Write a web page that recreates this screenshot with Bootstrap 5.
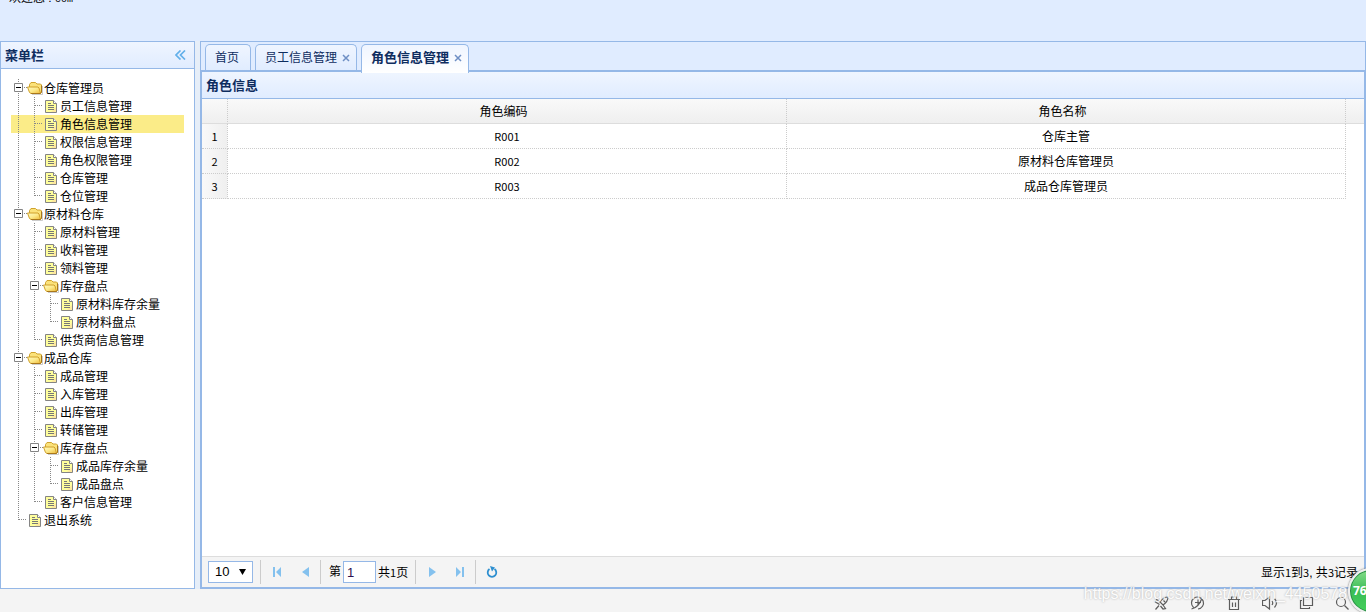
<!DOCTYPE html>
<html lang="zh-CN">
<head>
<meta charset="utf-8">
<meta name="viewport" content="width=device-width, initial-scale=1">
<title>仓库管理系统</title>
<link rel="stylesheet" href="https://cdn.jsdelivr.net/npm/bootstrap@5.3.0/dist/css/bootstrap.min.css">
<style>
:root{--edge:#95b8e7;--ink:#0e2d5f}
body{height:100vh;font:12px/18px "Liberation Sans","Noto Sans CJK SC",sans-serif;color:#000;background:#f4f4f4;overflow:hidden}
.digits{font-family:"Noto Sans CJK SC",sans-serif;font-size:11px}
.mono{font-family:"Liberation Mono",monospace;font-size:10px}
.top-area{height:41px;background:#e0ecff;overflow:hidden;padding-left:9px}
.welcome{margin-top:-11px;line-height:18px}
.work-area{background:#e6eef8;min-height:0;gap:5px}
.side{width:195px;border:1px solid var(--edge);background:#fff}
.bar-title{height:27px;padding:0 4px;background:linear-gradient(#eff5ff,#e0ecff);border-bottom:1px solid var(--edge);color:var(--ink);font-size:13px;font-weight:700;line-height:27px;margin:0}
.bare{border:0;background:none;padding:0;display:flex;align-items:center;justify-content:center}
.tree{padding:10px;margin:0;list-style:none}
.tree li{display:flex;height:18px}
.tree li.picked{background:#fbec88}
.tree a{color:#000;text-decoration:none;line-height:20px;padding-left:1px;white-space:nowrap}
.tree svg{width:16px;height:18px;flex:none}
.tabs-head{background:#e0ecff;border:1px solid var(--edge);border-bottom:0;height:29px;padding:2px 4px 0;gap:4px}
.tab{height:27px;border:1px solid var(--edge);border-bottom:0;border-radius:5px 5px 0 0;background:linear-gradient(#eff5ff,#e0ecff);padding:0 11px 0 9px;color:var(--ink);line-height:26px;display:flex;align-items:center}
.tab a{color:inherit;text-decoration:none}
.tab.on{height:29px;position:relative;background:linear-gradient(#eff5ff,#fff);font-weight:700;font-size:13px;padding-bottom:2px}
.tab.closable{padding-right:6px}
.tab .bare{margin-left:5px}
.tab-body{border:2px solid var(--edge);background:#fff;min-height:0}
.grid-wrap{position:relative;overflow:hidden;background:linear-gradient(#f9f9f9,#efefef) 0 0/100% 24px no-repeat}
.grid-wrap::after{content:"";position:absolute;right:0;top:24px;width:18px;height:1px;background:#ddd}
.roles{width:calc(100% - 18px);table-layout:fixed;border-collapse:separate;border-spacing:0;text-align:center}
.roles th,.roles td{height:25px;padding:2px 0 0;font-weight:400;border-right:1px dotted #ccc;border-bottom:1px dotted #ccc;line-height:22px}
.roles .digits{padding:0}
.roles thead th{border-bottom:1px solid #ddd;padding-right:7px}
.roles tbody th{background:linear-gradient(90deg,#f9f9f9,#efefef)}
.roles .num{width:26px}
.pager{height:31px;border-top:1px solid #ddd;background:#f4f4f4;padding:0 6px;line-height:20px}
.pager select{width:45px;height:22px;border:1px solid var(--edge);background:#fff;padding:0 0 0 6px;font-size:13px;appearance:none;color:#000;border-radius:0;display:block}
.picker{position:relative;margin-right:6px}
.picker svg{position:absolute;right:7px;top:8px;pointer-events:none}
.pager input{width:33px;height:22px;border:1px solid var(--edge);padding:0 3px;font-size:13px;color:#2c1050;margin:0 2px}
.pager .bare{width:28px;height:24px}
.rule{width:1px;height:24px;background:#ccc;margin:0 2px 0 1px}
.page-no{margin-left:6px}
.total{margin-right:6px}
.foot{height:23px;gap:20px;padding:6px 16px 0 0}
.foot .bare{width:16px;height:16px}
.foot svg{width:16px;height:16px;fill:none;stroke:#5c5c5c;stroke-width:1.2}
.water{position:absolute;right:10px;bottom:7px;font-size:16px;line-height:22px;color:#fff;opacity:.8;text-shadow:0 0 2px #999;pointer-events:none}
.ball{position:absolute;right:-28px;bottom:-2px;width:46px;height:46px;border-radius:50%;border:2px solid #eee;box-shadow:0 0 2px #555,inset 0 0 0 1px #2a8c46;background:linear-gradient(#86dd8a,#3bbd56 50%,#43d05a);color:#fff;font:700 12px/42px "Open Sans",sans-serif;padding-left:3px}
</style>
</head>
<body class="d-flex flex-column position-relative">
<svg class="position-absolute" width="0" height="0">
  <defs>
    <linearGradient id="fg" x1="0" y1="0" x2="1" y2="1"><stop offset="0" stop-color="#fffcc4"/><stop offset=".5" stop-color="#fce98a"/><stop offset="1" stop-color="#eebb3a"/></linearGradient>
    <symbol id="v" viewBox="0 0 16 18"><path d="M7.500 0V18" stroke="#888" stroke-dasharray="1 1"/></symbol>
    <symbol id="t" viewBox="0 0 16 18"><path d="M7.500 0V18M8 8.500H16" stroke="#888" stroke-dasharray="1 1"/></symbol>
    <symbol id="l" viewBox="0 0 16 18"><path d="M7.500 0V9M8 8.500H16" stroke="#888" stroke-dasharray="1 1"/></symbol>
    <symbol id="m" viewBox="0 0 16 18"><path d="M7.500 0V18M13 8.500H16" stroke="#888" stroke-dasharray="1 1"/><path d="M3.500 4.500h8v8h-8z" fill="#fff" stroke="#848484"/><path d="M5 8.500h5" stroke="#000"/></symbol>
    <symbol id="f" viewBox="0 0 16 18"><path d="M5 15.500h10.500V7" fill="none" stroke="#aaa" stroke-opacity=".6"/><path d="M2.500 8V5.500l1.500-2h4.500l1.500 1.500h3.500l1 1v7l-1 1.500" fill="#fbe27a" stroke="#cfa22c"/><path d="M.500 8h10.500l1 1 1.500 5.500H4L2.500 13.500z" fill="url(#fg)" stroke="#d0a02a"/><path d="M4 14.500h9.500l1-1.500V6.500" fill="none" stroke="#a9771a"/></symbol>
    <symbol id="d" viewBox="0 0 16 18"><path d="M2.500 3.500h8l3 3v9h-11z" fill="#ffff9c" stroke="#848484"/><path d="M10.500 3.500v3h3" fill="#fff" stroke="#848484"/><path d="M13 10v5H8z" fill="#fbd9a0" opacity=".6"/><path d="M5 6.500h3M5 8.500h6M5 10.500h6M5 12.500h6" stroke="#777"/></symbol>
    <symbol id="x" viewBox="0 0 8 8"><path d="M1 1l6 6M7 1l-6 6" stroke="#6e8fc4" stroke-width="1.500"/></symbol>
  </defs>
</svg>

<header class="top-area"><div class="welcome">欢迎您 : <span class="mono">com</span></div></header>

<main class="work-area d-flex flex-fill">
  <aside class="side flex-shrink-0">
    <div class="bar-title d-flex align-items-center justify-content-between">菜单栏
      <button class="bare me-1" aria-label="收起"><svg width="11" height="10" fill="none" stroke="#62b0ea" stroke-width="1.700"><path d="M5.500 .500L1 5l4.500 4.500M10 .500L5.500 5 10 9.500"/></svg></button>
    </div>
    <ul class="tree">
      <li><svg><use href="#m"/></svg><svg><use href="#f"/></svg><a href="#">仓库管理员</a></li>
      <li><svg><use href="#v"/></svg><svg><use href="#t"/></svg><svg><use href="#d"/></svg><a href="#">员工信息管理</a></li>
      <li class="picked"><svg><use href="#v"/></svg><svg><use href="#t"/></svg><svg><use href="#d"/></svg><a href="#">角色信息管理</a></li>
      <li><svg><use href="#v"/></svg><svg><use href="#t"/></svg><svg><use href="#d"/></svg><a href="#">权限信息管理</a></li>
      <li><svg><use href="#v"/></svg><svg><use href="#t"/></svg><svg><use href="#d"/></svg><a href="#">角色权限管理</a></li>
      <li><svg><use href="#v"/></svg><svg><use href="#t"/></svg><svg><use href="#d"/></svg><a href="#">仓库管理</a></li>
      <li><svg><use href="#v"/></svg><svg><use href="#l"/></svg><svg><use href="#d"/></svg><a href="#">仓位管理</a></li>
      <li><svg><use href="#m"/></svg><svg><use href="#f"/></svg><a href="#">原材料仓库</a></li>
      <li><svg><use href="#v"/></svg><svg><use href="#t"/></svg><svg><use href="#d"/></svg><a href="#">原材料管理</a></li>
      <li><svg><use href="#v"/></svg><svg><use href="#t"/></svg><svg><use href="#d"/></svg><a href="#">收料管理</a></li>
      <li><svg><use href="#v"/></svg><svg><use href="#t"/></svg><svg><use href="#d"/></svg><a href="#">领料管理</a></li>
      <li><svg><use href="#v"/></svg><svg><use href="#m"/></svg><svg><use href="#f"/></svg><a href="#">库存盘点</a></li>
      <li><svg><use href="#v"/></svg><svg><use href="#v"/></svg><svg><use href="#t"/></svg><svg><use href="#d"/></svg><a href="#">原材料库存余量</a></li>
      <li><svg><use href="#v"/></svg><svg><use href="#v"/></svg><svg><use href="#l"/></svg><svg><use href="#d"/></svg><a href="#">原材料盘点</a></li>
      <li><svg><use href="#v"/></svg><svg><use href="#l"/></svg><svg><use href="#d"/></svg><a href="#">供货商信息管理</a></li>
      <li><svg><use href="#m"/></svg><svg><use href="#f"/></svg><a href="#">成品仓库</a></li>
      <li><svg><use href="#v"/></svg><svg><use href="#t"/></svg><svg><use href="#d"/></svg><a href="#">成品管理</a></li>
      <li><svg><use href="#v"/></svg><svg><use href="#t"/></svg><svg><use href="#d"/></svg><a href="#">入库管理</a></li>
      <li><svg><use href="#v"/></svg><svg><use href="#t"/></svg><svg><use href="#d"/></svg><a href="#">出库管理</a></li>
      <li><svg><use href="#v"/></svg><svg><use href="#t"/></svg><svg><use href="#d"/></svg><a href="#">转储管理</a></li>
      <li><svg><use href="#v"/></svg><svg><use href="#m"/></svg><svg><use href="#f"/></svg><a href="#">库存盘点</a></li>
      <li><svg><use href="#v"/></svg><svg><use href="#v"/></svg><svg><use href="#t"/></svg><svg><use href="#d"/></svg><a href="#">成品库存余量</a></li>
      <li><svg><use href="#v"/></svg><svg><use href="#v"/></svg><svg><use href="#l"/></svg><svg><use href="#d"/></svg><a href="#">成品盘点</a></li>
      <li><svg><use href="#v"/></svg><svg><use href="#l"/></svg><svg><use href="#d"/></svg><a href="#">客户信息管理</a></li>
      <li><svg><use href="#l"/></svg><svg><use href="#d"/></svg><a href="#">退出系统</a></li>
    </ul>
  </aside>

  <section class="d-flex flex-column flex-fill">
    <div class="tabs-head d-flex">
      <div class="tab"><a href="#">首页</a></div>
      <div class="tab closable"><a href="#">员工信息管理</a><button class="bare" aria-label="关闭"><svg width="8" height="8"><use href="#x"/></svg></button></div>
      <div class="tab closable on"><a href="#">角色信息管理</a><button class="bare" aria-label="关闭"><svg width="8" height="8"><use href="#x"/></svg></button></div>
    </div>
    <div class="tab-body d-flex flex-column flex-fill">
      <h2 class="bar-title">角色信息</h2>
      <div class="grid-wrap flex-fill">
        <table class="roles">
          <thead><tr><th class="num"></th><th>角色编码</th><th>角色名称</th></tr></thead>
          <tbody>
            <tr><th class="digits">1</th><td class="digits">R001</td><td>仓库主管</td></tr>
            <tr><th class="digits">2</th><td class="digits">R002</td><td>原材料仓库管理员</td></tr>
            <tr><th class="digits">3</th><td class="digits">R003</td><td>成品仓库管理员</td></tr>
          </tbody>
        </table>
      </div>
      <div class="pager d-flex align-items-center">
        <div class="picker"><select aria-label="每页条数"><option>10</option><option>20</option></select><svg width="7" height="6"><path d="M0 0h7L3.500 6z"/></svg></div>
        <span class="rule"></span>
        <button class="bare" aria-label="首页"><svg width="10" height="10" fill="#84c1ee"><path d="M1 0h2v10H1zM9 0v10L4 5z"/></svg></button>
        <button class="bare" aria-label="上一页"><svg width="7" height="10" fill="#84c1ee"><path d="M7 0v10L0 5z"/></svg></button>
        <span class="rule"></span>
        <label class="page-no d-flex align-items-center">第<input value="1"></label>
        <span class="total">共<span class="digits">1</span>页</span>
        <span class="rule"></span>
        <button class="bare" aria-label="下一页"><svg width="7" height="10" fill="#84c1ee"><path d="M0 0v10l7-5z"/></svg></button>
        <button class="bare" aria-label="末页"><svg width="10" height="10" fill="#84c1ee"><path d="M7 0h2v10H7zM1 0v10l5-5z"/></svg></button>
        <span class="rule"></span>
        <button class="bare" aria-label="刷新"><svg width="12" height="12" fill="none" stroke="#2d8fd0" stroke-width="1.800"><path d="M8.500 3a4.300 4.300 0 1 1-5 0"/><path d="M4 0l5 1.500L6 5.500z" fill="#2d8fd0" stroke="none"/></svg></button>
        <span class="ms-auto">显示<span class="digits">1</span>到<span class="digits">3</span>, 共<span class="digits">3</span>记录</span>
      </div>
    </div>
  </section>
</main>

<footer class="foot d-flex justify-content-end">
  <button class="bare" aria-label="加速"><svg><path d="M14 2c-4 0-6 2-8 5l3 3c3-2 5-4 5-8zM6 7L2.500 4.500 1.500 7l4 2.500M9 10l2.500 3.500-2.500.500-2.500-3M5 10.500L1.500 14.500M9.500 5.500l1.500 1.500"/></svg></button>
  <button class="bare" aria-label="下载"><svg><path d="M3.500 12.500A6 6 0 1 1 8 14M1.500 14C6 13 10 9 12 3M8 4.500v6M5 7.500h6"/></svg></button>
  <button class="bare" aria-label="清理"><svg><path d="M2 4.500h12M5.500 4V2h5v2M3.500 5v9.500h9V5M6.500 7.500v4.500M9.500 7.500v4.500"/></svg></button>
  <button class="bare" aria-label="声音"><svg><path d="M.500 5.500H3L7.500 2v12L3 10.500H.500zM10 6q1.500 2 0 4M12.500 3.500q4 4.500 0 9"/></svg></button>
  <button class="bare" aria-label="窗口"><svg><path d="M5.500 2.500h9v8h-9zM4 5.500H2.500v8h9V12"/></svg></button>
  <button class="bare" aria-label="缩放"><svg><circle cx="7" cy="7" r="4.500"/><path d="M10.500 10.500l4 4"/></svg></button>
</footer>
<div class="water">https://blog.csdn.net/weixin_44505789</div>
<div class="ball">76</div>
<script src="https://cdn.jsdelivr.net/npm/bootstrap@5.3.0/dist/js/bootstrap.bundle.min.js"></script>
</body>
</html>
